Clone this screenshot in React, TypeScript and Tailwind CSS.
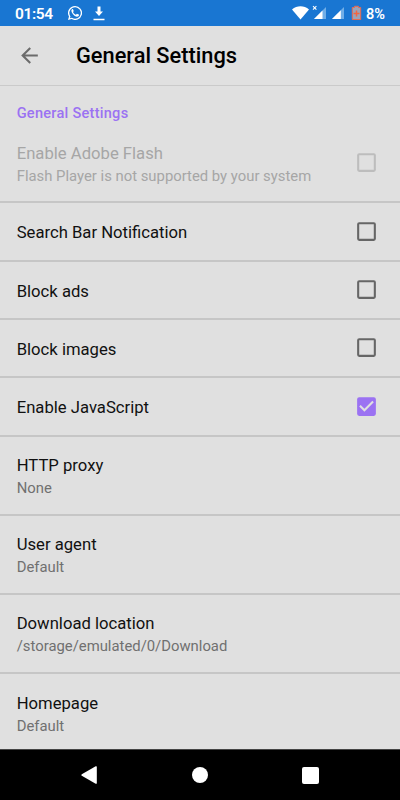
import clsx from 'clsx';

interface Setting {
    title: string;
    summary?: string;
    checkbox?: boolean;
    checked?: boolean;
    disabled?: boolean;
}

const SETTINGS: Setting[] = [
    {
        title: 'Enable Adobe Flash',
        summary: 'Flash Player is not supported by your system',
        checkbox: true,
        disabled: true,
    },
    { title: 'Search Bar Notification', checkbox: true },
    { title: 'Block ads', checkbox: true },
    { title: 'Block images', checkbox: true },
    { title: 'Enable JavaScript', checkbox: true, checked: true },
    { title: 'HTTP proxy', summary: 'None' },
    { title: 'User agent', summary: 'Default' },
    { title: 'Download location', summary: '/storage/emulated/0/Download' },
    { title: 'Homepage', summary: 'Default' },
];

function StatusBar() {
    return (
        <div className="flex h-[25.5px] shrink-0 items-center bg-[#1976d2] pl-[15px] pr-[15px] pt-[2px] text-white">
            <span className="mt-px w-[53px] text-[15.5px] font-semibold leading-none tracking-[-0.4px]">01:54</span>
            {/* WhatsApp */}
            <svg className="-mt-[2px] h-[14px] w-[14px]" viewBox="0 0 24 24" fill="currentColor" aria-hidden="true">
                <path d="M12 0A12 12 0 0 0 1.700 18.100L0 24l6.100-1.600A12 12 0 1 0 12 0zm0 21.800a9.800 9.800 0 0 1-5.200-1.500l-3.500.9.900-3.400A9.800 9.800 0 1 1 12 21.800z" />
                <path d="M8.600 5.700c-.4-.9-1.600-.6-2.200.3-1.300 1.900-.6 4.200 1.600 7.100 2.600 3.400 6 5.700 8.700 5 1.700-.5 2.200-1.600 2.200-2.900 0-.5-3.200-2-3.600-1.900-.6.100-1.100 1.500-1.600 1.600-.9.100-5-3.300-4.900-4.400 0-.5 1.100-1.200 1-1.900z" />
            </svg>
            <svg className="-mt-[1px] ml-[10.500px] h-[15px] w-[12px]" viewBox="0 0 12 15" fill="currentColor" aria-hidden="true">
                <path d="M4.500 0.500h3v5h2.500L6 10 2 5.500h2.500zM0.500 12.800h11v1.500h-11z" />
            </svg>
            <div className="-mt-[2px] ml-auto flex items-center">
                <svg className="h-[16px] w-[71px]" viewBox="0 0 71 16" aria-hidden="true">
                    <path d="M0 4.500C5 .1 12 .1 17 4.500L8.500 14.500z" fill="#fff" />
                    <path d="M34 2V14H22z" fill="#70aee7" />
                    <path d="M30.500 5.500V14H22z" fill="#fff" />
                    <path d="M21 1.200l3.400 3.400M24.400 1.200L21 4.600" stroke="#fff" strokeWidth="1.100" />
                    <path d="M52 2V14H40z" fill="#70aee7" />
                    <path d="M48.800 5.200V14H40z" fill="#fff" />
                    <path d="M62.500 1.300h4v1.200h2.200v12h-8.400v-12h2.200z" fill="#9aa3b8" stroke="#e8694f" strokeWidth="1" />
                    <path d="M64.500 5.500v6M61.500 8.500h6" stroke="#f4653f" strokeWidth="1.500" />
                </svg>
                <span className="ml-[3px] mt-[4px] text-[14.5px] font-semibold leading-none">8%</span>
            </div>
        </div>
    );
}

function Toolbar() {
    return (
        <header className="flex h-[60.500px] shrink-0 items-center border-b border-[#cacaca] pl-[17px]">
            <svg className="h-[25px] w-[25px] text-[#6b6b6b]" viewBox="0 0 24 24" fill="currentColor" aria-hidden="true">
                <path d="M20 11H7.830l5.590-5.590L12 4l-8 8 8 8 1.410-1.410L7.830 13H20z" />
            </svg>
            <h1 className="ml-[34px] mt-[2px] text-[21.800px] font-medium leading-none text-black">General Settings</h1>
        </header>
    );
}

function Checkbox({ checked, disabled }: { checked?: boolean; disabled?: boolean }) {
    return (
        <svg
            className={clsx(
                '-mt-px h-[25px] w-[25px] shrink-0',
                checked ? 'text-[#9b72f2]' : disabled ? 'text-[#bdbdbd]' : 'text-[#666666]'
            )}
            viewBox="0 0 24 24"
            fill="currentColor"
            aria-hidden="true"
        >
            {checked ? (
                <path d="M19 3H5a2 2 0 0 0-2 2v14a2 2 0 0 0 2 2h14a2 2 0 0 0 2-2V5a2 2 0 0 0-2-2zm-9 14l-5-5 1.410-1.410L10 14.170l7.590-7.590L19 8l-9 9z" />
            ) : (
                <path d="M19 5v14H5V5h14m0-2H5a2 2 0 0 0-2 2v14a2 2 0 0 0 2 2h14a2 2 0 0 0 2-2V5a2 2 0 0 0-2-2z" />
            )}
        </svg>
    );
}

function SettingRow({ title, summary, checkbox, checked, disabled }: Setting) {
    return (
        <li
            className={clsx(
                'flex shrink-0 items-center justify-between border-b-2 border-[#c6c6c6] pl-[16.700px] pr-[21px]',
                summary ? 'h-[79.200px]' : 'h-[58.330px]'
            )}
        >
            <div className="pt-[3.500px]">
                <div className={clsx('text-[16.670px] leading-[22px]', disabled ? 'text-[#a6a6a6]' : 'text-[#111111]')}>
                    {title}
                </div>
                {summary && (
                    <div className={clsx('text-[14.850px] leading-[22px]', disabled ? 'text-[#a6a6a6]' : 'text-[#707070]')}>
                        {summary}
                    </div>
                )}
            </div>
            {checkbox && <Checkbox checked={checked} disabled={disabled} />}
        </li>
    );
}

function NavigationBar() {
    return (
        <nav className="flex h-[51px] shrink-0 items-center justify-between border-t border-[#444444] bg-black pl-[81px] pr-[81.500px] text-white">
            <svg className="h-[18px] w-[18px]" viewBox="0 0 18 18" fill="currentColor" aria-hidden="true">
                <path d="M14.700.3Q15.800-.2 15.800 1v16q0 1.200-1.100.700L.8 9.800Q-.2 9 .8 8.200z" />
            </svg>
            <div className="mr-px h-[16px] w-[16px] rounded-full bg-white" />
            <div className="h-[17px] w-[17px] rounded-[2px] bg-white" />
        </nav>
    );
}

export default function App() {
    return (
        <div className="flex h-[800px] w-[400px] flex-col overflow-hidden bg-[#e0e0e0] font-['Roboto',sans-serif]">
            <StatusBar />
            <Toolbar />
            <main className="min-h-0 flex-1 overflow-hidden">
                <h2 className="flex h-[38.200px] items-center pl-[16.700px] pt-[16px] text-[14.580px] font-medium leading-[20px] tracking-[0.250px] text-[#9b72f2]">
                    General Settings
                </h2>
                <ul>
                    {SETTINGS.map((setting) => (
                        <SettingRow key={setting.title} {...setting} />
                    ))}
                </ul>
            </main>
            <NavigationBar />
        </div>
    );
}
